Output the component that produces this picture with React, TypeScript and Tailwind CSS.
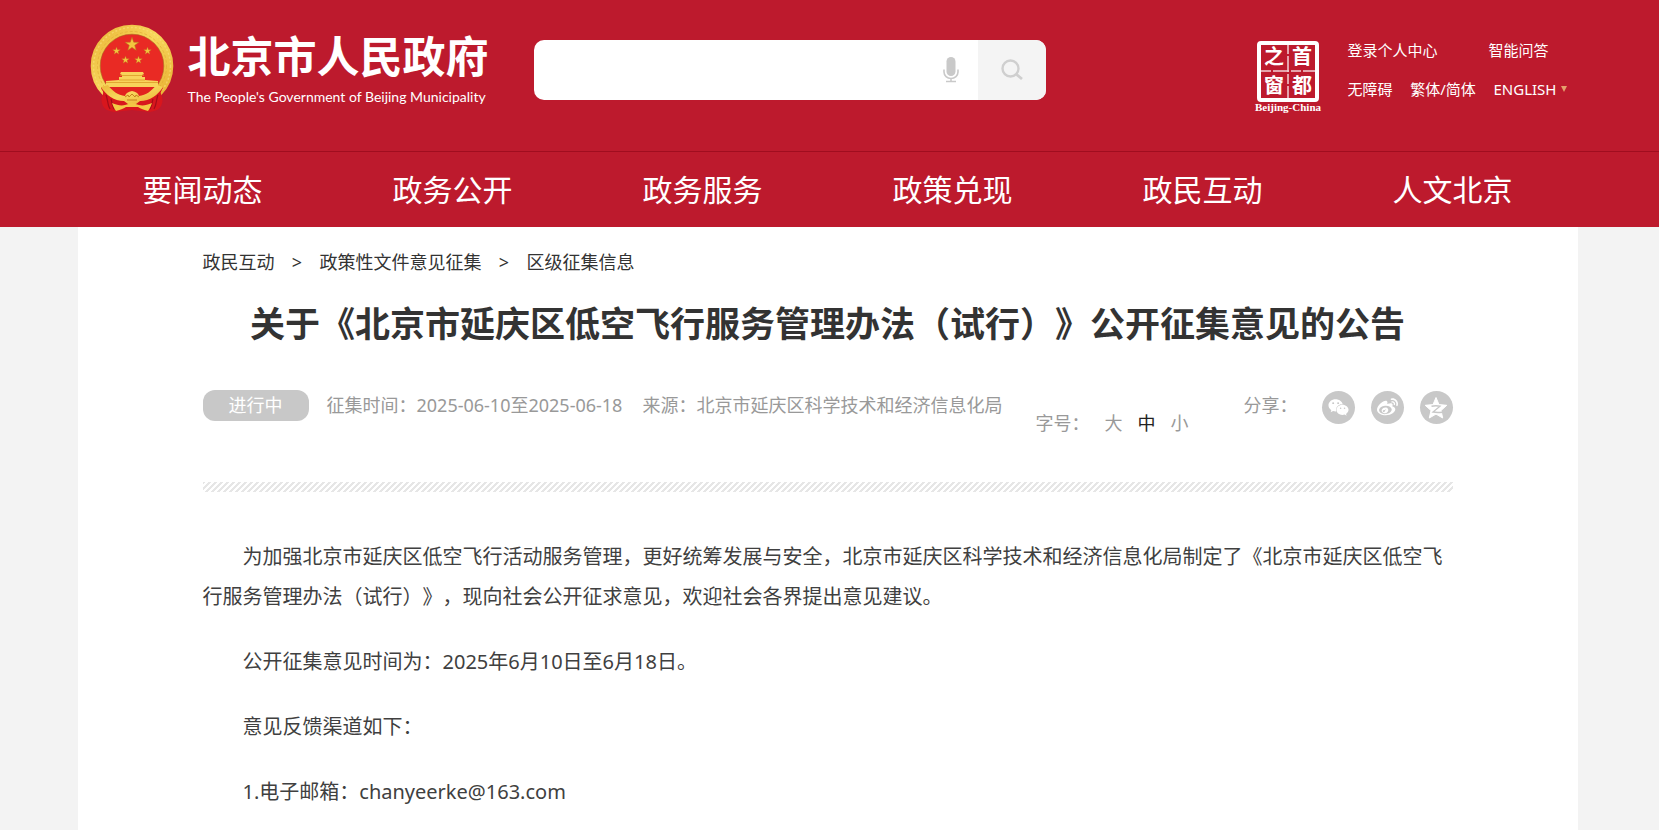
import React, { useState } from "react";
import { FaWeixin, FaWeibo } from "react-icons/fa";

const navItems = [
  "要闻动态",
  "政务公开",
  "政务服务",
  "政策兑现",
  "政民互动",
  "人文北京",
];

const breadcrumbs = ["政民互动", "政策性文件意见征集", "区级征集信息"];

const paragraphs = [
  "为加强北京市延庆区低空飞行活动服务管理，更好统筹发展与安全，北京市延庆区科学技术和经济信息化局制定了《北京市延庆区低空飞行服务管理办法（试行）》，现向社会公开征求意见，欢迎社会各界提出意见建议。",
  "公开征集意见时间为：2025年6月10日至6月18日。",
  "意见反馈渠道如下：",
  "1.电子邮箱：chanyeerke@163.com",
];

const fontSizes = ["大", "中", "小"];

const STAR = "M0-5 1.2-1.6 4.8-1.5 1.9.6 2.9 4 0 2-2.9 4-1.9.6-4.8-1.5-1.2-1.6Z";

const Emblem = () => (
  <svg viewBox="6 4 84 90" className="h-[90px] w-[84px] shrink-0" aria-hidden="true">
    <defs>
      <linearGradient id="gold" x1="0" y1="0" x2="1" y2="1">
        <stop offset="0" stopColor="#ebb83a" />
        <stop offset="0.45" stopColor="#f7d75c" />
        <stop offset="1" stopColor="#e8ae30" />
      </linearGradient>
    </defs>
    <circle cx="48" cy="46" r="37" fill="#e92a24" />
    <circle cx="48" cy="46" r="36.5" fill="none" stroke="url(#gold)" strokeWidth="9.6" />
    <circle cx="48" cy="46" r="38.5" fill="none" stroke="#fae07c" strokeWidth="1.5" strokeDasharray="2 2" opacity="0.6" />
    <circle cx="48" cy="46" r="34.5" fill="none" stroke="#e0a832" strokeWidth="1" strokeDasharray="3 2" opacity="0.6" />
    <circle cx="48" cy="46" r="31.8" fill="none" stroke="#a8611c" strokeWidth="0.6" />
    <g fill="#f3c53f" stroke="#b9701c" strokeWidth="0.4">
      <path d={STAR} transform="translate(48 24.5) scale(1.45)" />
      <path d={STAR} transform="translate(32.5 31) scale(.8)" />
      <path d={STAR} transform="translate(63.5 31) scale(.8)" />
      <path d={STAR} transform="translate(41.5 40) scale(.8)" />
      <path d={STAR} transform="translate(54.5 40) scale(.8)" />
    </g>
    <path
      d="M37 52h22l1 2-2 1v2h3v3l13 1v6H22v-6l13-1v-3h3v-2l-2-1Z"
      fill="#f8d35a"
    />
    <path d="M36 55.500h24M35 60h26M22 62.500h52" stroke="#d9941f" strokeWidth="0.7" />
    <path
      d="M17 67c0 3 3 4 2 7-2 4-2 8 0 12 2 4 7 5 11 6l18-2 18 2c4-1 9-2 11-6 2-4 2-8 0-12-1-3 2-4 2-7l-8 3H25Z"
      fill="#d8161d"
    />
    <path
      d="M22 75c2 4 1 9 4 14M74 75c-2 4-1 9-4 14M27 79c1 3 1 6 3 10M69 79c-1 3-1 6-3 10"
      stroke="#a30c18"
      strokeWidth="1.2"
      fill="none"
    />
    <path d="M23 67h50c-4 6-10 9-14 10H37c-4-1-10-4-14-10Z" fill="#e2231f" />
    <path
      d="M17 67l7-2c4 6 10 10 17 11 1-3 3-4 7-5 4 1 6 2 7 5 7-1 13-5 17-11l7 2c-5 8-13 14-23 14l-4 3h-8l-4-3c-10 0-18-6-23-14Z"
      fill="url(#gold)"
    />
    <path d="M41 77l3-2 1 2 3-3 3 3 1-2 3 2M43 80h10" stroke="#c27a19" strokeWidth="0.9" fill="none" />
    <path
      d="M28 83c5 2 9 3 13 2l7-2 7 2c4 1 8 0 13-2-1 3-2 5-4 8-5-1-8-3-10-4H42c-2 1-5 3-10 4-2-3-3-5-4-8Z"
      fill="#f3c846"
    />
  </svg>
);

const Seal = () => (
  <svg
    viewBox="0 0 70 74"
    className="h-[74px] w-[70px] shrink-0"
    role="img"
    aria-label="首都之窗"
    fill="#fff"
  >
    <rect x="5" y="4" width="58" height="57" rx="2" fill="none" stroke="#fff" strokeWidth="4" />
    <path d="M34 5v54M7 32h55" stroke="#fff" strokeWidth="1.500" strokeDasharray="10 2 16 2" opacity="0.8" />
    <g className="font-['Noto_Sans_CJK_SC',sans-serif] text-[20px] font-bold" textAnchor="middle">
      <text x="20" y="25">之</text>
      <text x="48" y="25">首</text>
      <text x="20" y="54">窗</text>
      <text x="48" y="54">都</text>
    </g>
    <text
      x="34"
      y="72"
      textAnchor="middle"
      className="font-['Liberation_Serif',serif] text-[11px] font-bold"
    >
      Beijing-China
    </text>
  </svg>
);

const MicIcon = () => (
  <svg viewBox="0 0 16 26" className="h-[26px] w-4" fill="#c9c9c9" aria-hidden="true">
    <rect x="3.500" y="0" width="9" height="19" rx="4.500" />
    <path d="M1 12.500v2.500a7 6.500 0 0 0 14 0v-2.500M8 21.500v3M3 24.500h10" fill="none" stroke="#c9c9c9" strokeWidth="1.600" />
  </svg>
);

const SearchIcon = () => (
  <svg viewBox="0 0 22 22" className="size-[22px]" fill="none" stroke="#cfcfcf" aria-hidden="true">
    <circle cx="9.500" cy="9.500" r="8" strokeWidth="2.400" />
    <path d="M15 15 21 20" strokeWidth="2.800" />
  </svg>
);

const QzoneIcon = () => (
  <svg viewBox="0 0 24 24" className="size-6" aria-hidden="true">
    <path
      d="M12 1.500 15 8.600l7.800.7-5.800 5.200 1.700 7.500-6.700-3.900L5.300 22 7 14.500 1.200 9.300 9 8.600Z"
      fill="#fff"
      stroke="#fff"
      strokeLinejoin="round"
    />
    <path d="M7.500 10.200c3-.6 6-.6 8.500 0l-7 5.800c3 .6 6 .6 9 .2" fill="none" stroke="#c8c8c8" strokeWidth="1.400" />
  </svg>
);

const shareItems = [
  { name: "微信", icon: <FaWeixin size={21} /> },
  { name: "微博", icon: <FaWeibo size={21} /> },
  { name: "QQ空间", icon: <QzoneIcon /> },
];

const Header = () => (
  <header className="bg-[#bd1a2d] text-white">
    <div className="border-b border-[#a00d1f] pr-1">
      <div className="mx-auto flex h-[151px] w-full max-w-[1500px] items-start pr-[10px] pl-3">
        <a href="#" className="mt-6 flex w-[444px] shrink-0 gap-[14px]">
          <Emblem />
          <span className="flex flex-col whitespace-nowrap">
            <span className="mt-2 text-[43px] leading-[50px] font-bold">北京市人民政府</span>
            <span className="font-['Lato',sans-serif] text-[14px] leading-[30px]">
              The People's Government of Beijing Municipality
            </span>
          </span>
        </a>
        <form className="mt-10 flex h-[60px] w-[512px] shrink-0 overflow-hidden rounded-[10px] bg-white">
          <input
            type="text"
            aria-label="搜索"
            className="min-w-0 flex-1 px-4 text-lg text-[#333] outline-none"
          />
          <button type="button" aria-label="语音输入" className="flex w-[54px] items-center justify-center">
            <MicIcon />
          </button>
          <button type="button" aria-label="搜索" className="flex w-[68px] items-center justify-center bg-[#f4f4f4]">
            <SearchIcon />
          </button>
        </form>
        <div className="mt-[39px] ml-auto flex gap-6 whitespace-nowrap">
          <Seal />
          <div className="w-[220px] text-[15px] leading-[22px]">
            <div className="flex gap-[51px]">
              <a href="#">登录个人中心</a>
              <a href="#">智能问答</a>
            </div>
            <div className="mt-[17px] flex justify-between">
              <a href="#">无障碍</a>
              <a href="#">繁体/简体</a>
              <a href="#" className="flex items-center gap-[5px]">
                ENGLISH
                <svg viewBox="0 0 6 6" className="size-[6px]" fill="#e5a06c" aria-hidden="true">
                  <path d="M0 0h6L3 6Z" />
                </svg>
              </a>
            </div>
          </div>
        </div>
      </div>
    </div>
    <nav className="pr-1">
      <ul className="mx-auto grid h-[75px] w-full max-w-[1500px] grid-cols-6 items-center text-center text-[30px] leading-[40px]">
        {navItems.map((item) => (
          <li key={item}>
            <a href="#">{item}</a>
          </li>
        ))}
      </ul>
    </nav>
  </header>
);

export default function App() {
  const [fontSize, setFontSize] = useState("中");

  return (
    <div
      lang="zh-CN"
      className="min-h-screen bg-[#f3f3f3] font-['Noto_Sans','Noto_Sans_CJK_SC',sans-serif] text-[#404040] [text-spacing-trim:space-all]"
    >
      <Header />
      <div className="pr-1">
        <main className="mx-auto min-h-[603px] w-full max-w-[1500px] bg-white px-[125px] pt-[22px]">
          <ol className="flex text-[18px] leading-[26px] text-[#333]">
            {breadcrumbs.map((item, index) => (
              <li key={item} className="flex">
                {index > 0 && <span className="w-[45px] text-center">&gt;</span>}
                <a href="#">{item}</a>
              </li>
            ))}
          </ol>

          <h1 className="mt-[24px] text-center text-[35px] leading-[50px] font-bold text-[#333]">
            关于《北京市延庆区低空飞行服务管理办法（试行）》公开征集意见的公告
          </h1>

          <div className="mt-[41px] flex items-start text-[18px] leading-[31px] whitespace-nowrap text-[#999]">
            <span className="w-[106px] shrink-0 rounded-xl bg-[#c8c8c8] text-center text-white">
              进行中
            </span>
            <span className="ml-[18px]">征集时间：2025-06-10至2025-06-18</span>
            <span className="ml-5">来源：北京市延庆区科学技术和经济信息化局</span>
            <div className="mt-[18px] ml-auto flex gap-[15px]">
              <span>字号：</span>
              {fontSizes.map((size) => (
                <button
                  key={size}
                  type="button"
                  onClick={() => setFontSize(size)}
                  className={size === fontSize ? "text-[#222]" : "text-[#999]"}
                >
                  {size}
                </button>
              ))}
            </div>
            <span className="ml-[55px]">分享：</span>
            <div className="ml-6 flex gap-4">
              {shareItems.map((item) => (
                <a
                  key={item.name}
                  href="#"
                  aria-label={item.name}
                  className="mt-px flex size-[33px] items-center justify-center rounded-full bg-[#c8c8c8] text-white"
                >
                  {item.icon}
                </a>
              ))}
            </div>
          </div>

          <div className="mt-[43px] h-[10px] bg-[linear-gradient(135deg,#e6e6e6_25%,#fff_25%,#fff_50%,#e6e6e6_50%,#e6e6e6_75%,#fff_75%)] bg-[length:6px_6px]" />

          <article className="mt-[45px] text-[20px] leading-[40px]">
            {paragraphs.map((text) => (
              <p key={text} className="mb-[25px] indent-[40px]">
                {text}
              </p>
            ))}
          </article>
        </main>
      </div>
    </div>
  );
}
